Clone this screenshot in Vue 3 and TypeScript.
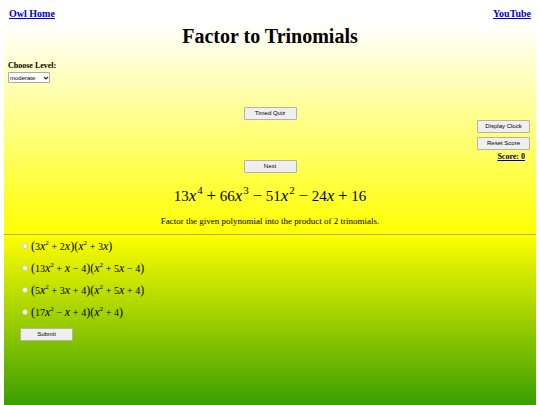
<script setup lang="ts">
import { ref } from 'vue'

type Kind = 'number' | 'variable' | 'power' | 'operator' | 'paren'
interface Token {
  kind: Kind
  text: string
}

// Splits an expression such as "3x^2 + 2x" into typeset tokens.
function tokenize(source: string): Token[] {
  const parts = source.match(/\^\d+|\d+|[a-z]|[+−]|[()]/g) ?? []
  return parts.map((part): Token => {
    if (part.startsWith('^')) return { kind: 'power', text: part.slice(1) }
    if (/\d/.test(part)) return { kind: 'number', text: part }
    if (/[a-z]/.test(part)) return { kind: 'variable', text: part }
    if (/[()]/.test(part)) return { kind: 'paren', text: part }
    return { kind: 'operator', text: part }
  })
}

const level = ref('moderate')
const answer = ref('')
const score = ref(0)
const showClock = ref(false)

const polynomial = tokenize('13x^4 + 66x^3 − 51x^2 − 24x + 16')
const choices = [
  '(3x^2 + 2x)(x^2 + 3x)',
  '(13x^2 + x − 4)(x^2 + 5x − 4)',
  '(5x^2 + 3x + 4)(x^2 + 5x + 4)',
  '(17x^2 − x + 4)(x^2 + 4)',
].map((source) => ({ source, tokens: tokenize(source) }))
</script>

<template>
  <div class="page">
    <nav class="links">
      <a href="#home">Owl Home</a>
      <a href="#youtube">YouTube</a>
    </nav>
    <h1>Factor to Trinomials</h1>

    <div class="level">
      <label for="level">Choose Level:</label>
      <div class="picker">
        <select id="level" v-model="level">
          <option value="moderate">moderate</option>
        </select>
        <svg class="chevron" viewBox="0 0 6 4" aria-hidden="true">
          <path d="M1 .8 3 2.8 5 .8" fill="none" stroke="#222" stroke-width="1.2" />
        </svg>
      </div>
    </div>

    <div class="controls">
      <div class="middle">
        <button type="button">Timed Quiz</button>
        <button type="button">Next</button>
      </div>
      <div class="side">
        <button type="button" @click="showClock = !showClock">Display Clock</button>
        <button type="button" @click="score = 0">Reset Score</button>
        <p class="score">Score: {{ score }}</p>
      </div>
    </div>

    <p class="math problem">
      <span v-for="(t, i) in polynomial" :key="i" :class="t.kind">{{ t.text }}</span>
    </p>
    <p class="prompt">Factor the given polynomial into the product of 2 trinomials.</p>
    <hr />

    <form @submit.prevent>
      <label v-for="c in choices" :key="c.source" class="choice">
        <input v-model="answer" type="radio" name="answer" :value="c.source" />
        <span class="math">
          <span v-for="(t, i) in c.tokens" :key="i" :class="t.kind">{{ t.text }}</span>
        </span>
      </label>
      <button type="submit">Submit</button>
    </form>
  </div>
</template>

<style>
body {
  background: #fff;
}
</style>

<style scoped>
.page {
  box-sizing: border-box;
  min-height: 100vh;
  margin: 0 4px;
  padding: 8px 0;
  background: linear-gradient(#fff 6%, #ff0 58%, #3b9e00 100%);
  color: #000;
  font-family: "Liberation Serif", serif;
  font-size: 9px;
}
.links {
  display: flex;
  justify-content: space-between;
  padding: 0 5px;
  font-size: 10px;
  line-height: 12px;
  font-weight: bold;
}
a {
  color: #0000d0;
}
h1 {
  margin: 4px 0 0;
  font-size: 20px;
  line-height: 24px;
  text-align: center;
}
.level {
  display: flex;
  flex-direction: column;
  align-items: flex-start;
  margin: 12px 0 0 4px;
  font-size: 8px;
  font-weight: bold;
  line-height: 12px;
}
.picker {
  display: grid;
  align-items: center;
}
.picker > * {
  grid-area: 1 / 1;
}
.chevron {
  justify-self: end;
  width: 6px;
  height: 4px;
  margin-right: 1px;
  pointer-events: none;
}
select {
  appearance: none;
  box-sizing: border-box;
  width: 42px;
  height: 11px;
  padding: 0 0 0 1px;
  border: 1px solid #aaa;
  border-radius: 1px;
  background: #fff;
  color: #000;
  font-family: "Liberation Sans", sans-serif;
  font-size: 6px;
}
button {
  box-sizing: border-box;
  width: 53px;
  height: 13px;
  padding: 0;
  border: 1px solid #b4b4a4;
  border-radius: 1px;
  background: #efefef;
  color: #000;
  font-family: "Liberation Sans", sans-serif;
  font-size: 6px;
  line-height: 11px;
}
.controls {
  display: grid;
  grid-template-columns: 1fr auto 1fr;
  margin-top: 24px;
}
.middle {
  grid-column: 2;
  display: flex;
  flex-direction: column;
  gap: 40px;
}
.side {
  display: flex;
  flex-direction: column;
  align-items: flex-end;
  gap: 4px;
  padding: 13px 6px 0 0;
}
.score {
  margin: -2px 5px 0 0;
  color: #000060;
  font-size: 8px;
  line-height: 10px;
  font-weight: bold;
  text-decoration: underline;
}
.math {
  display: flex;
  align-items: baseline;
  font-size: 10px;
  line-height: 12px;
}
.variable {
  font-size: 12px;
  font-style: italic;
}
.power {
  align-self: flex-start;
  font-size: 7px;
  line-height: 6px;
}
.operator {
  width: 11px;
  text-align: center;
}
.paren {
  font-size: 12px;
}
.problem {
  justify-content: center;
  margin: 14px 0 0;
  font-size: 15px;
  line-height: 18px;
}
.problem .variable {
  font-size: 17px;
}
.problem .power {
  padding-left: 1px;
  font-size: 11px;
  line-height: 6px;
}
.problem .operator {
  width: 17px;
  font-size: 17px;
}
.prompt {
  margin: 10px 0 0;
  line-height: 12px;
  text-align: center;
}
hr {
  height: 1px;
  margin: 7px 0 0;
  border: 0;
  background: #b0b040;
}
form {
  display: flex;
  flex-direction: column;
  align-items: flex-start;
  gap: 10px;
  padding: 5px 0 0 16px;
}
.choice {
  display: flex;
  align-items: center;
  gap: 3px;
  height: 12px;
  padding-left: 2px;
}
input {
  appearance: none;
  box-sizing: border-box;
  width: 6px;
  height: 6px;
  margin: 0;
  border: 1px solid #c8c8b0;
  border-radius: 50%;
  background: #fff;
}
input:checked {
  background: #0060df;
}
</style>
